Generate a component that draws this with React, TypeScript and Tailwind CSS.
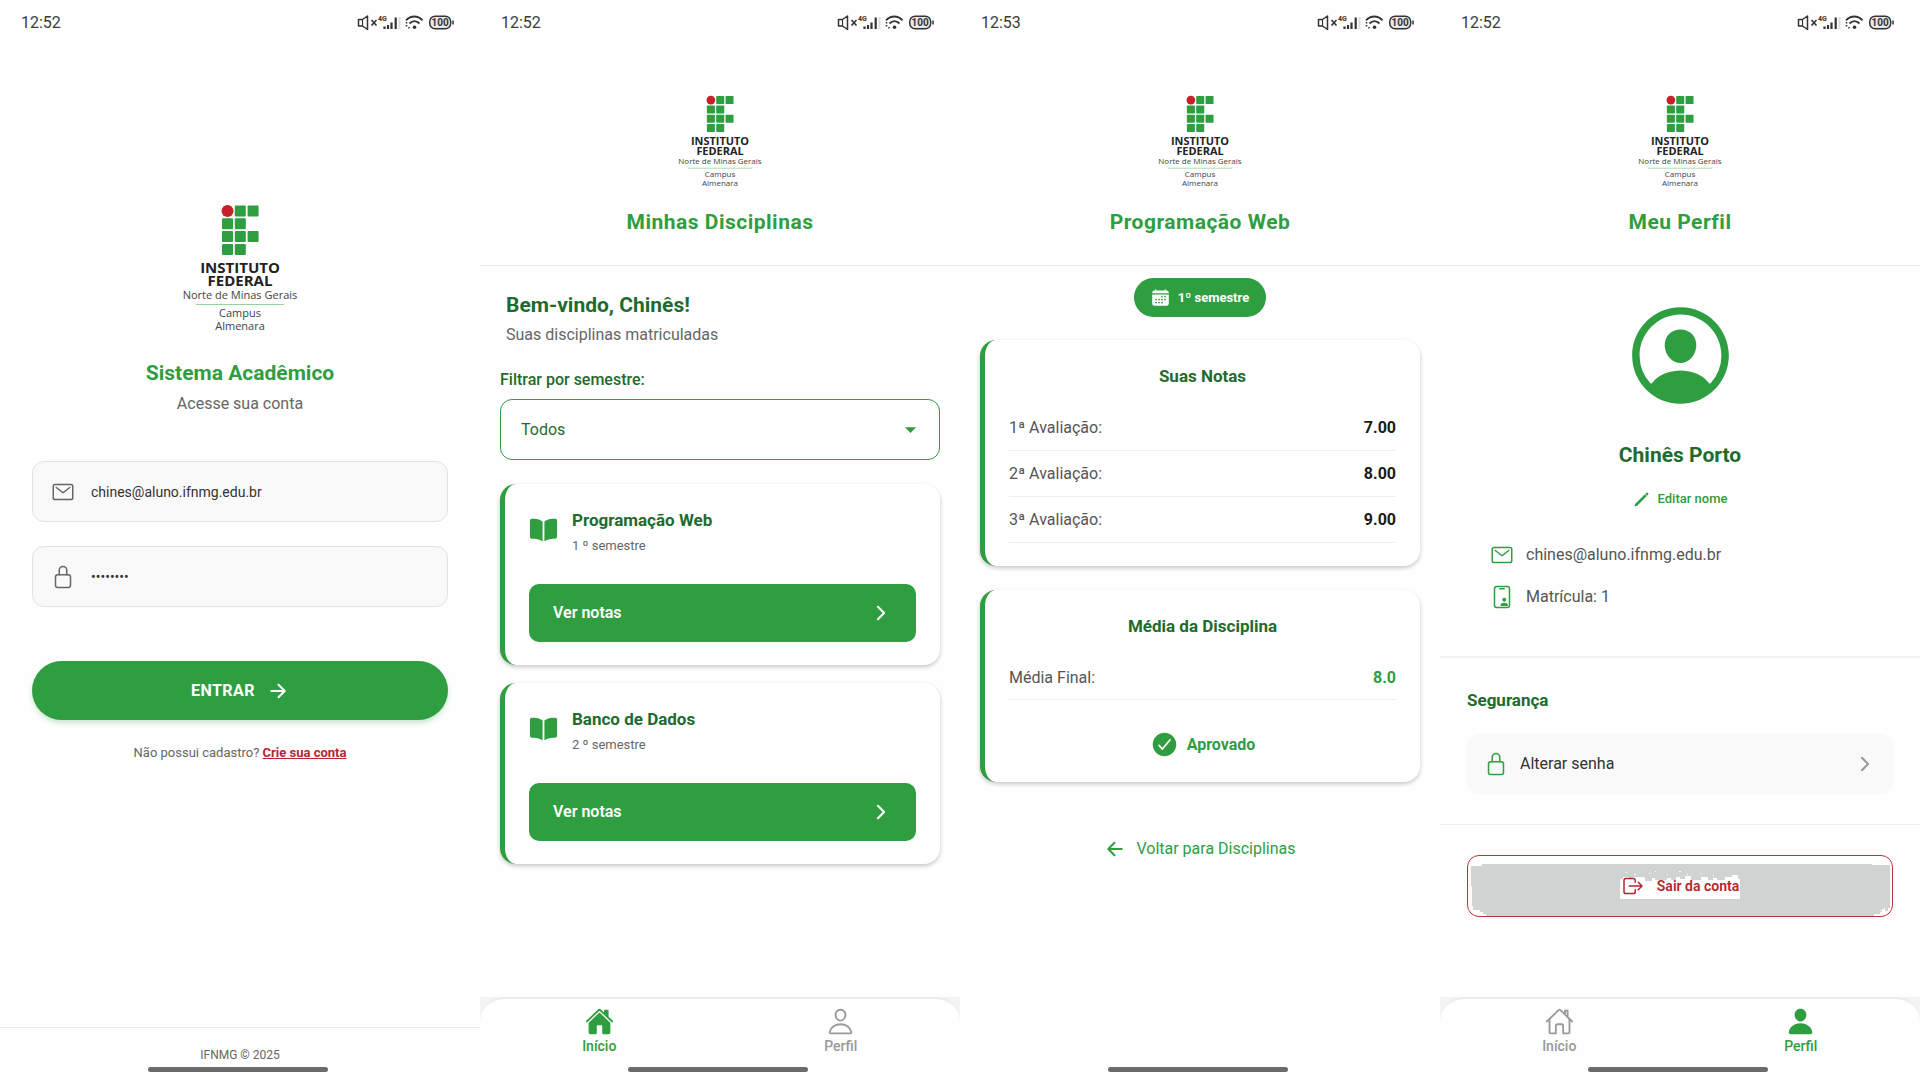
import type { ReactNode } from 'react';
import {
  IoArrowBack,
  IoArrowForward,
  IoBook,
  IoCalendar,
  IoCheckmarkCircle,
  IoChevronForward,
  IoHome,
  IoHomeOutline,
  IoIdCardOutline,
  IoLockClosedOutline,
  IoLogOutOutline,
  IoMailOutline,
  IoPencil,
  IoPerson,
  IoPersonCircleOutline,
  IoPersonOutline,
} from 'react-icons/io5';
import { MdArrowDropDown } from 'react-icons/md';

const disciplinas = [
  { id: 1, nome: 'Programação Web', semestre: 1 },
  { id: 2, nome: 'Banco de Dados', semestre: 2 },
];

const notas = [
  { label: '1ª Avaliação:', valor: '7.00' },
  { label: '2ª Avaliação:', valor: '8.00' },
  { label: '3ª Avaliação:', valor: '9.00' },
];

// Green cells of the IF mark as [column, row]
const cells = [
  [1, 0], [2, 0],
  [0, 1], [1, 1],
  [0, 2], [1, 2], [2, 2],
  [0, 3], [1, 3],
];

function Logo({ className }: { className: string }) {
  return (
    <svg viewBox="0 0 236 256" className={className} role="img" aria-label="Instituto Federal">
      <circle cx="93" cy="14" r="12" fill="#c8202a" />
      {cells.map(([col, row]) => (
        <rect
          key={`${col}-${row}`}
          x={82 + col * 25.6}
          y={3 + row * 25.6}
          width="22"
          height="22"
          rx="2"
          fill="#2f9e41"
        />
      ))}
      <g textAnchor="middle" fontFamily="'Open Sans', sans-serif" fill="#222">
        <text x="118" y="138" fontSize="30" fontWeight="700">INSTITUTO</text>
        <text x="118" y="164" fontSize="30" fontWeight="700">FEDERAL</text>
        <text x="118" y="190" fontSize="22" fill="#444">Norte de Minas Gerais</text>
        <text x="118" y="226" fontSize="22" fill="#444">Campus</text>
        <text x="118" y="251" fontSize="22" fill="#444">Almenara</text>
      </g>
      <path d="M30 201h176" stroke="#9ccfa4" strokeWidth="2" />
    </svg>
  );
}

function StatusBar({ time }: { time: string }) {
  return (
    <div className="flex h-[46px] items-center justify-between pl-[21px] pr-[26px] text-base text-[#3c3c3c]">
      <span>{time}</span>
      <svg width="98" height="18" viewBox="0 0 98 18" fill="none" stroke="#333" aria-hidden="true">
        <path d="M2.5 5.5h4l5-3.5v13.500l-5-3.500h-4z" strokeWidth="1.5" strokeLinejoin="round" />
        <path d="M6.500 5.500v6.500" strokeWidth="1.200" />
        <path d="M15.500 6l5 5.500M20.500 6l-5 5.500" strokeWidth="1.600" />
        <text x="22" y="7" fontSize="7" fontWeight="700" fill="#333" stroke="none">4G</text>
        <path d="M28.500 12.500v2.500M32 11v4M35.500 8.500V15M39.700 3.500V15" strokeWidth="2.200" />
        <path d="M43.500 3v12" stroke="#ddd" strokeWidth="2" />
        <path d="M50 6.300c5-5 11.500-5 16.500 0M53.500 9.500c3-3 7-3 10 0" strokeWidth="1.900" />
        <circle cx="58.500" cy="13.200" r="1.800" fill="#333" stroke="none" />
        <path d="M50.500 8v1.500M50.500 11v1.500M53 13v1.500" strokeWidth="1.600" />
        <rect x="73.700" y="2.200" width="21" height="12.600" rx="5.500" strokeWidth="1.500" fill="#e8e8e8" />
        <path d="M97 6.500v4" strokeWidth="1.500" />
        <text x="84.200" y="12.200" fontSize="10" fontWeight="700" textAnchor="middle" fill="#333" stroke="none">100</text>
      </svg>
    </div>
  );
}

function HomeIndicator() {
  return (
    <div className="flex justify-center pr-1 pb-2">
      <div className="h-[5px] w-[180px] rounded-full bg-[#6b6b6b]" />
    </div>
  );
}

function Screen({ time, children }: { time: string; children: ReactNode }) {
  return (
    <section className="flex min-h-screen flex-col bg-[#fefefe]">
      <StatusBar time={time} />
      {children}
    </section>
  );
}

function ScreenHeader({ title }: { title: string }) {
  return (
    <header className="flex flex-col items-center border-b border-[#ebebeb] pt-[49px] pb-[29px]">
      <Logo className="w-[86px]" />
      <h1 className="mt-5 text-[21px] leading-7 font-bold tracking-[0.5px] text-[#2f9e41]">{title}</h1>
    </header>
  );
}

function TabBar({ active }: { active: 'inicio' | 'perfil' }) {
  const home = active === 'inicio';
  return (
    <div className="bg-[#f3f3f3]">
      <nav className="rounded-t-3xl border-t-2 border-[#ebebeb] bg-[#fefefe]">
        <div className="flex h-[68px] gap-[3px] text-sm font-medium">
          <a
            href="#inicio"
            className={`flex flex-1 flex-col items-center pt-2 ${home ? 'text-[#2f9e41]' : 'text-[#999]'}`}
          >
            {home ? <IoHome size={29} /> : <IoHomeOutline size={29} />}
            Início
          </a>
          <a
            href="#perfil"
            className={`flex flex-1 flex-col items-center pt-2 ${home ? 'text-[#999]' : 'text-[#2f9e41]'}`}
          >
            {home ? <IoPersonOutline size={29} /> : <IoPerson size={29} />}
            Perfil
          </a>
        </div>
        <HomeIndicator />
      </nav>
    </div>
  );
}

function Card({ children }: { children: ReactNode }) {
  return (
    <article className="rounded-2xl border-l-[5px] border-[#2f9e41] bg-white px-6 pt-6 pb-[23px] shadow-[0_2px_4px_rgba(0,0,0,0.22)]">
      {children}
    </article>
  );
}

function LoginScreen() {
  return (
    <Screen time="12:52">
      <main className="flex flex-1 flex-col px-8 pt-[158px]">
        <div className="flex flex-col items-center">
          <Logo className="w-[118px]" />
          <h1 className="mt-[27px] text-[21px] leading-7 font-bold text-[#2f9e41]">Sistema Acadêmico</h1>
          <p className="mt-[5px] text-base text-[#666]">Acesse sua conta</p>
        </div>
        <form className="mt-[45px] flex flex-col">
          <label className="flex h-[61px] items-center gap-4 rounded-xl border border-[#e2e2e2] bg-[#f9f9f9] px-[18px] text-[#666]">
            <IoMailOutline size={24} />
            <input
              type="email"
              aria-label="E-mail"
              defaultValue="chines@aluno.ifnmg.edu.br"
              className="min-w-0 flex-1 bg-transparent text-sm text-[#333] outline-none"
            />
          </label>
          <label className="mt-6 flex h-[61px] items-center gap-4 rounded-xl border border-[#e2e2e2] bg-[#f9f9f9] px-[18px] text-[#666]">
            <IoLockClosedOutline size={24} />
            <input
              type="password"
              aria-label="Senha"
              defaultValue="12345678"
              className="min-w-0 flex-1 bg-transparent text-sm text-[#333] outline-none"
            />
          </label>
          <button
            type="button"
            className="mt-[54px] flex h-[59px] items-center justify-center gap-3 rounded-full bg-[#2f9e41] text-base font-bold tracking-[0.5px] text-white shadow-[0_3px_5px_rgba(47,158,65,0.25)]"
          >
            ENTRAR
            <IoArrowForward size={22} />
          </button>
        </form>
        <p className="mt-[23px] text-center text-[13px] leading-5 text-[#666]">
          Não possui cadastro?{' '}
          <a href="#cadastro" className="font-bold text-[#b3262e] underline">
            Crie sua conta
          </a>
        </p>
      </main>
      <footer className="border-t border-[#ebebeb]">
        <p className="pt-[17px] pb-[2px] text-center text-xs leading-5 text-[#666]">IFNMG © 2025</p>
        <HomeIndicator />
      </footer>
    </Screen>
  );
}

function DisciplinasScreen() {
  return (
    <Screen time="12:52">
      <ScreenHeader title="Minhas Disciplinas" />
      <main className="flex flex-1 flex-col px-5 pt-[25px]">
        <div className="px-[6px]">
          <h2 className="text-[21px] leading-7 font-bold text-[#1e6b2e]">Bem-vindo, Chinês!</h2>
          <p className="mt-1 text-base text-[#666]">Suas disciplinas matriculadas</p>
        </div>
        <label htmlFor="semestre" className="mt-[21px] text-base font-medium text-[#1e6b2e]">
          Filtrar por semestre:
        </label>
        <div className="mt-[7px] grid items-center">
          <select
            id="semestre"
            className="col-start-1 row-start-1 h-[61px] appearance-none rounded-xl border border-[#2f9e41] bg-white px-5 text-base text-[#1e6b2e]"
          >
            <option>Todos</option>
            <option>1º semestre</option>
            <option>2º semestre</option>
          </select>
          <MdArrowDropDown size={27} className="pointer-events-none col-start-1 row-start-1 mr-4 justify-self-end text-[#2f9e41]" />
        </div>
        <div className="mt-6 flex flex-col gap-[18px]">
          {disciplinas.map((d) => (
            <Card key={d.id}>
              <div className="flex items-start gap-[14px]">
                <IoBook size={29} className="mt-2 text-[#2f9e41]" />
                <div>
                  <h3 className="text-[17px] leading-6 font-bold text-[#1e6b2e]">{d.nome}</h3>
                  <p className="mt-1 text-[13px] leading-5 text-[#666]">{d.semestre} º semestre</p>
                </div>
              </div>
              <button
                type="button"
                className="mt-7 flex h-[58px] w-full items-center justify-between rounded-[10px] bg-[#2f9e41] px-6 text-base font-semibold text-white"
              >
                Ver notas
                <IoChevronForward size={22} />
              </button>
            </Card>
          ))}
        </div>
      </main>
      <TabBar active="inicio" />
    </Screen>
  );
}

function NotasScreen() {
  return (
    <Screen time="12:53">
      <ScreenHeader title="Programação Web" />
      <main className="flex flex-1 flex-col px-5 pt-3">
        <p className="flex h-[39px] items-center gap-2 self-center rounded-full bg-[#2f9e41] px-[17px] text-[13px] font-bold text-white">
          <IoCalendar size={19} />
          1º semestre
        </p>
        <div className="mt-[23px] flex flex-col gap-6">
          <Card>
            <h2 className="text-center text-[17px] leading-6 font-bold text-[#1e6b2e]">Suas Notas</h2>
            <table className="mt-4 w-full text-base">
              <tbody>
                {notas.map((n) => (
                  <tr key={n.label} className="h-[46px] border-b border-[#eee]">
                    <th scope="row" className="pt-[2px] text-left font-normal text-[#555]">{n.label}</th>
                    <td className="pt-[2px] text-right font-bold text-[#1a1a1a]">{n.valor}</td>
                  </tr>
                ))}
              </tbody>
            </table>
          </Card>
          <Card>
            <h2 className="text-center text-[17px] leading-6 font-bold text-[#1e6b2e]">Média da Disciplina</h2>
            <table className="mt-4 w-full text-base">
              <tbody>
                <tr className="h-[46px] border-b border-[#eee]">
                  <th scope="row" className="pt-[2px] text-left font-normal text-[#555]">Média Final:</th>
                  <td className="pt-[2px] text-right font-bold text-[#2f9e41]">8.0</td>
                </tr>
              </tbody>
            </table>
            <p className="mt-[30px] flex items-center justify-center gap-2 text-base font-bold text-[#2f9e41]">
              <IoCheckmarkCircle size={29} />
              Aprovado
            </p>
          </Card>
        </div>
        <a href="#disciplinas" className="mt-[55px] flex items-center justify-center gap-[10px] text-base text-[#2f9e41]">
          <IoArrowBack size={22} />
          Voltar para Disciplinas
        </a>
      </main>
      <HomeIndicator />
    </Screen>
  );
}

function PerfilScreen() {
  return (
    <Screen time="12:52">
      <ScreenHeader title="Meu Perfil" />
      <main className="flex flex-1 flex-col">
        <div className="flex flex-col items-center border-b-2 border-[#f3f3f3] px-[50px] pt-[30px] pb-[47px]">
          <IoPersonCircleOutline size={119} className="text-[#2f9e41]" />
          <h2 className="mt-[26px] text-[21px] leading-7 font-bold text-[#1e6b2e]">Chinês Porto</h2>
          <button type="button" className="mt-5 flex items-center gap-2 text-[13px] leading-5 font-medium text-[#2f9e41]">
            <IoPencil size={17} />
            Editar nome
          </button>
          <ul className="mt-[34px] flex flex-col gap-[18px] self-stretch text-base text-[#555]">
            <li className="flex items-center gap-3">
              <IoMailOutline size={24} className="text-[#2f9e41]" />
              chines@aluno.ifnmg.edu.br
            </li>
            <li className="flex items-center gap-3">
              <IoIdCardOutline size={24} className="text-[#2f9e41]" />
              Matrícula: 1
            </li>
          </ul>
        </div>
        <div className="border-b border-[#ebebeb] px-[27px] pt-[30px] pb-[30px]">
          <h2 className="text-[17px] leading-6 font-bold text-[#1e6b2e]">Segurança</h2>
          <button
            type="button"
            className="mt-[22px] flex h-[60px] w-full items-center gap-3 rounded-xl bg-[#f9f9f9] px-[17px] text-base text-[#333]"
          >
            <IoLockClosedOutline size={24} className="text-[#2f9e41]" />
            Alterar senha
            <IoChevronForward size={22} className="ml-auto text-[#999]" />
          </button>
        </div>
        <button
          type="button"
          className="relative mx-[27px] mt-[30px] flex h-[62px] items-center justify-center gap-3 rounded-xl border border-[#c0303a] text-sm font-semibold text-[#b3262e]"
        >
          {/* pressed-state fill with its ragged edge */}
          <svg
            viewBox="0 0 424 60"
            preserveAspectRatio="none"
            className="absolute inset-0 size-full"
            shapeRendering="crispEdges"
            aria-hidden="true"
          >
            <path
              d="M3 10h11V8h390v1h18v43h-2v3h-3v-2h-3v3h-2v2h-6v2H18v-2h-3v-2h-3v-2H5v-4H4V30H3z"
              fill="#d1d3d2"
            />
            <path
              d="M152 23h3v-2h6v2h4v-2h12v4h7v-3h3v2h12v-2h4v2h5v-3h4v2h5v-3h6v4h10v-3h7v3h5v-2h4v2h8v-3h7v-2h6v4h2v20h-120z"
              fill="#fefefe"
            />
            <path
              d="M158 16h1v1h-1zM166 18h2v1h-2zM181 17h1v1h-1zM187 15h1v1h-1zM199 18h1v1h-1zM211 15h2v1h-2zM219 18h1v1h-1zM233 17h1v1h-1zM245 19h1v1h-1zM416 51h1v1h-1zM412 54h1v1h-1z"
              fill="#fefefe"
            />
          </svg>
          <IoLogOutOutline size={24} className="relative" />
          <span className="relative">Sair da conta</span>
        </button>
      </main>
      <TabBar active="perfil" />
    </Screen>
  );
}

export default function App() {
  return (
    <div className="grid min-h-screen grid-cols-4 bg-[#fefefe] font-[Roboto,'Liberation_Sans',sans-serif]">
      <LoginScreen />
      <DisciplinasScreen />
      <NotasScreen />
      <PerfilScreen />
    </div>
  );
}
